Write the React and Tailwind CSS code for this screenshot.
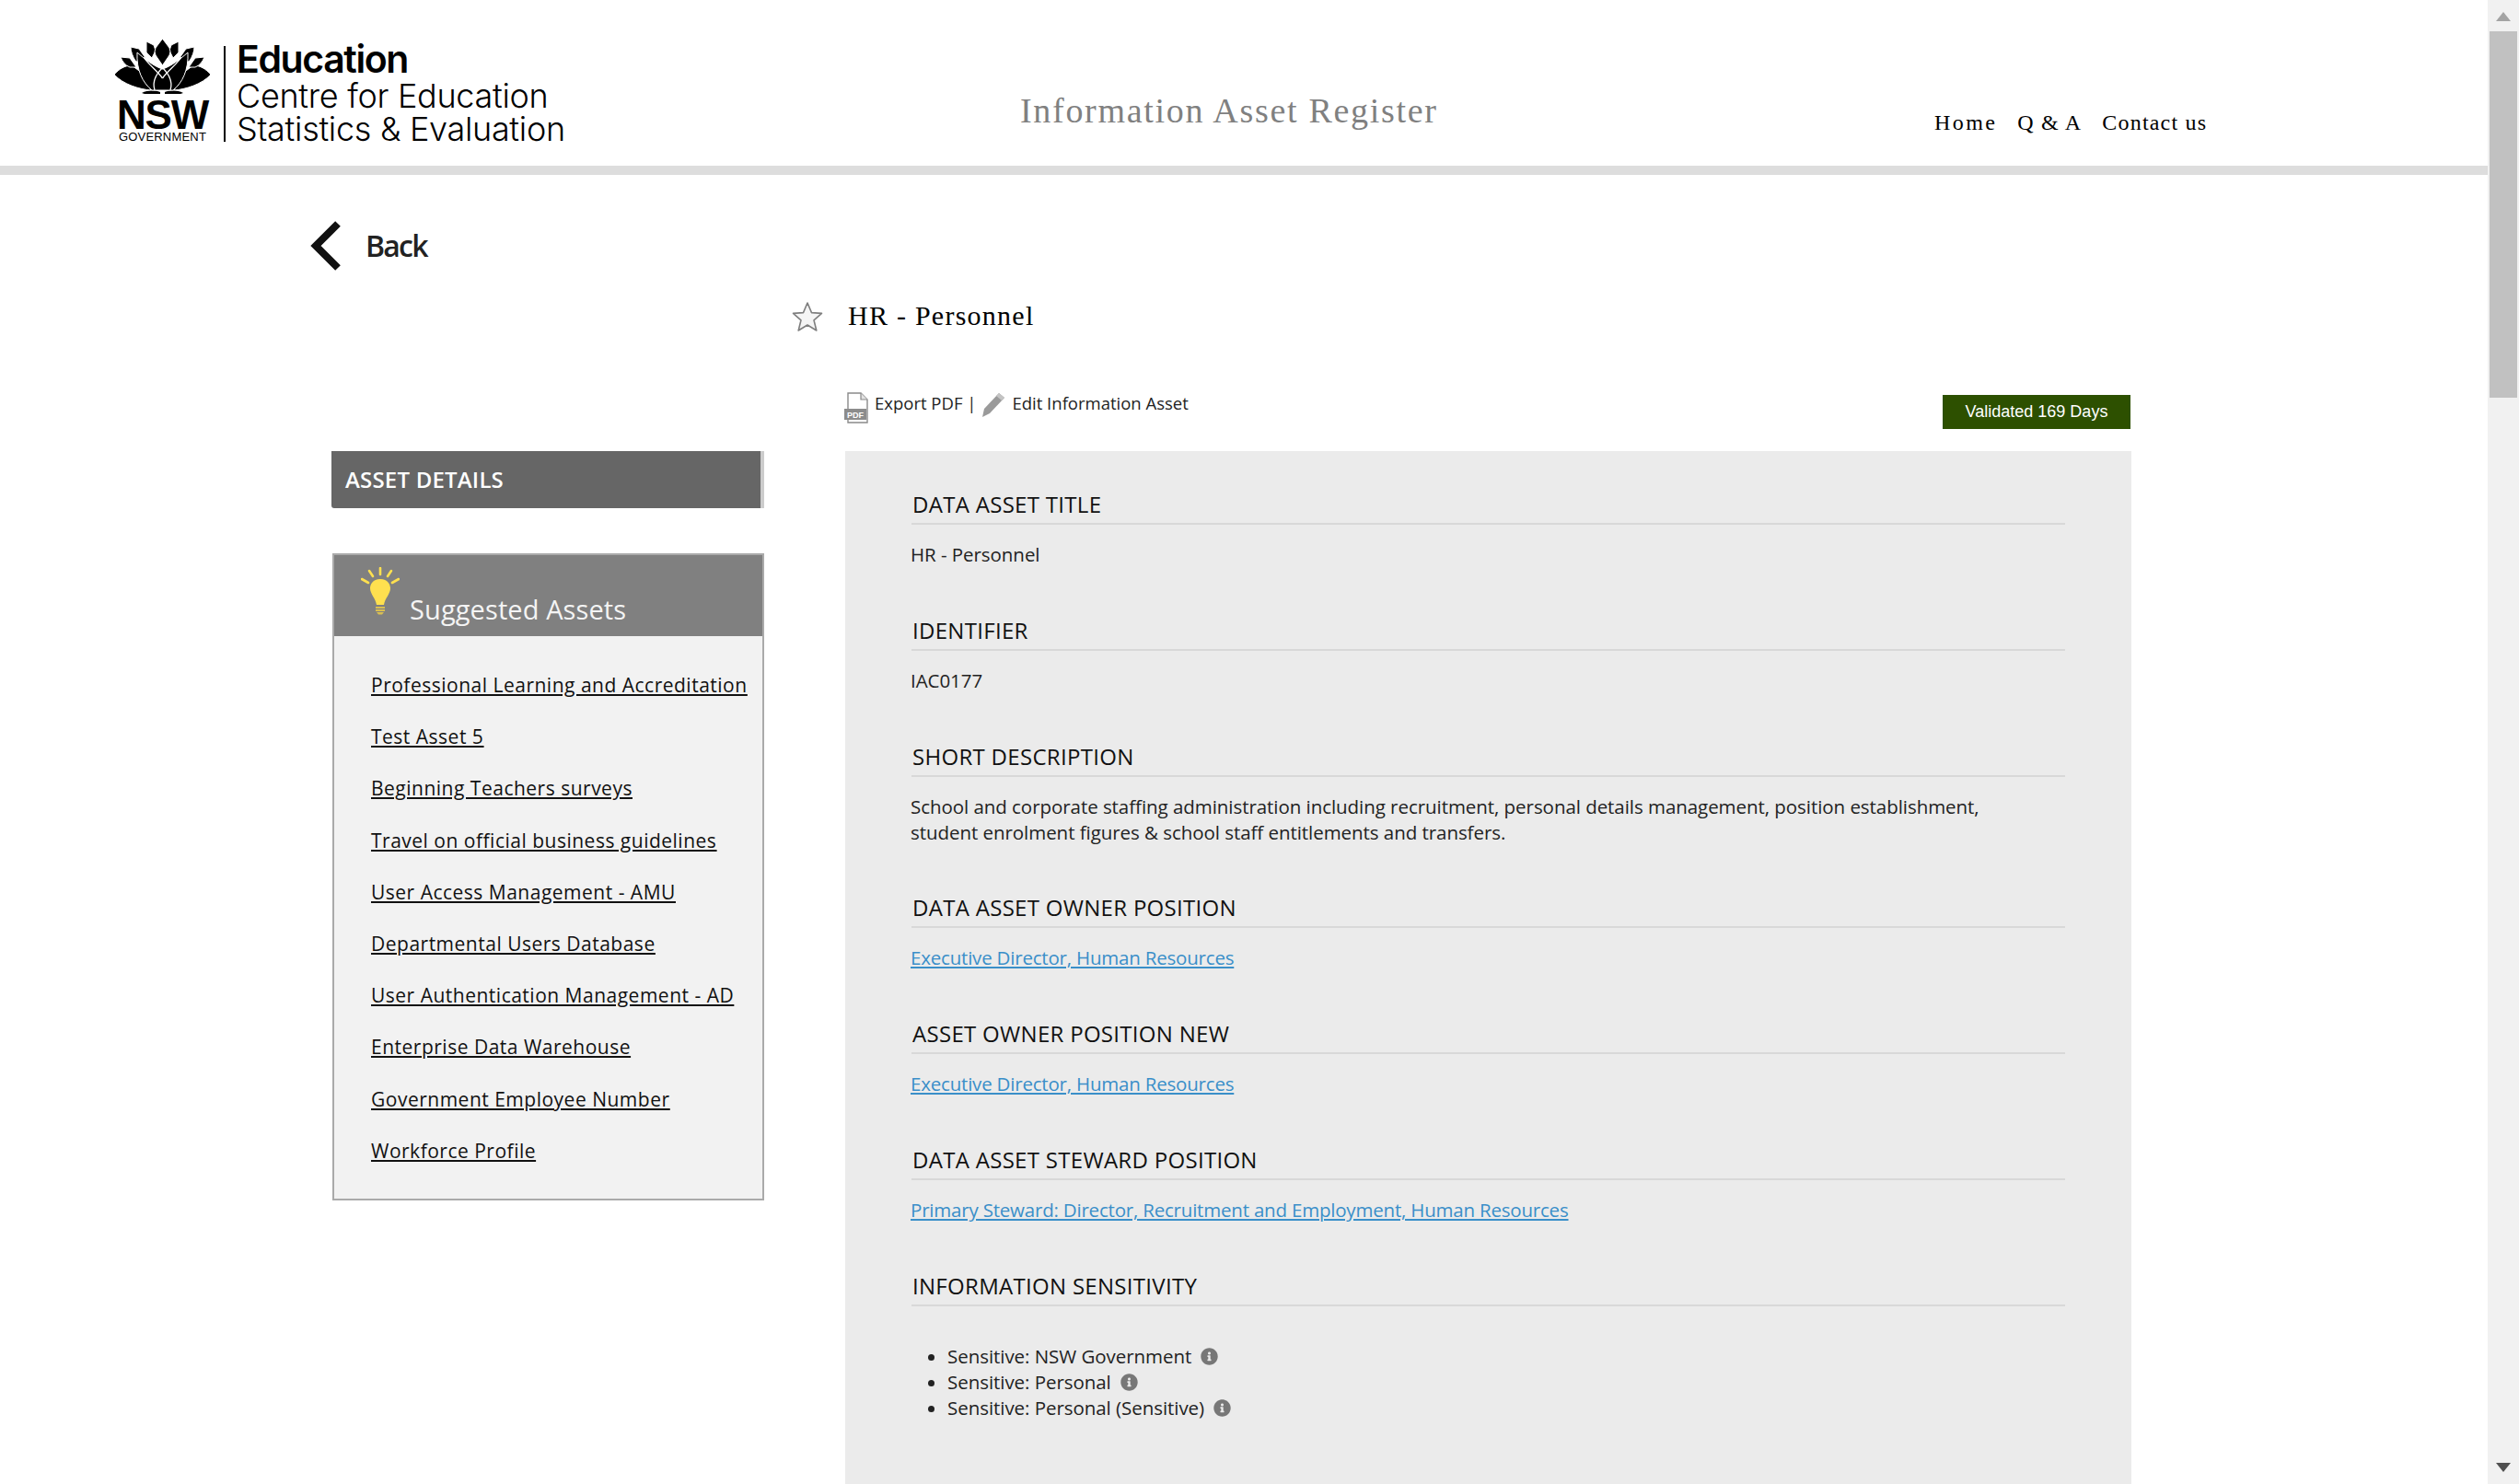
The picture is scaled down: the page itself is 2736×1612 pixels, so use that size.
import React from 'react';
import { FaInfoCircle } from 'react-icons/fa';

const sans = 'font-["Open_Sans",sans-serif]';

const suggested = [
  'Professional Learning and Accreditation',
  'Test Asset 5',
  'Beginning Teachers surveys',
  'Travel on official business guidelines',
  'User Access Management - AMU',
  'Departmental Users Database',
  'User Authentication Management - AD',
  'Enterprise Data Warehouse',
  'Government Employee Number',
  'Workforce Profile',
];

const sensitivity = ['Sensitive: NSW Government', 'Sensitive: Personal', 'Sensitive: Personal (Sensitive)'];

// waratah logo, right half is the left half mirrored
const FlowerHalf = () => (
  <g stroke="#fff" strokeWidth="1">
    <path d="M0 39 C5 33 12 29 19 29 L30 37 L40 56 C28 55 10 50 0 39 Z" />
    <path d="M7 20 L17 21 L24 31 L17 31 C12 29 9 25 7 20 Z" />
    <path d="M18 9 L27 11 L34 21 L30 28 L23 24 C20 19 18 14 18 9 Z" />
    <path d="M35 3 L43 7 L45 13 L41 21 L35 15 Z" />
    <path d="M30 59 C36 56 44 56 50 58 L50 60 L36 60 C34 60 32 60 30 59 Z" stroke="none" />
  </g>
);

const Flower = () => (
  <svg width="105" height="60" viewBox="0 0 105 60" className="block" fill="#000">
    <FlowerHalf />
    <g transform="translate(105 0) scale(-1 1)">
      <FlowerHalf />
    </g>
    <path d="M25 15 C33 22 43 30 52.5 33 C62 30 72 22 80 15 C81 34 74 48 64 56 L41 56 C31 48 24 34 25 15 Z" stroke="#fff" strokeWidth="1" />
    <path d="M52.5 0 L60 10 Q62 14 60 18 L52.5 29 L45 18 Q43 14 45 10 Z" stroke="#fff" strokeWidth="1" />
    <g fill="none" stroke="#fff" strokeWidth="1.3">
      <path d="M32 20 C37 28 46 34 52.5 43" />
      <path d="M73 20 C68 28 59 34 52.5 43" />
      <path d="M44 56 C41 46 46 36 58 27" />
      <path d="M61 56 C64 46 59 36 47 27" />
    </g>
  </svg>
);

const Bulb = () => (
  <svg width="42" height="52" viewBox="0 0 42 52" className="block">
    <g stroke="#ffe04f" strokeWidth="2.6" strokeLinecap="round">
      <path d="M21 1 L21 8" />
      <path d="M9 4 L13 10" />
      <path d="M33 4 L29 10" />
      <path d="M1 13 L8 17" />
      <path d="M41 13 L34 17" />
    </g>
    <path d="M21 13 C13 13 10 19 10 23 C10 29 16 34 17 41 L25 41 C26 34 32 29 32 23 C32 19 29 13 21 13 Z" fill="#ffe04f" />
    <path d="M16 43 H26 V45 H16 Z M16 46 H26 V48 H16 Z M17 49 H25 L23 51.5 H19 Z" fill="#d9bf52" />
  </svg>
);

const PdfIcon = () => (
  <svg width="28" height="34" viewBox="0 0 28 34" className="block">
    <path d="M5 1 H19 L26 8 V33 H5 Z" fill="#fff" stroke="#8a8a8a" strokeWidth="1.4" />
    <path d="M19 1 V8 H26" fill="#e2e2e2" stroke="#8a8a8a" strokeWidth="1.2" />
    <rect x="1" y="18" width="24" height="12" fill="#8c8c8c" />
    <text x="13" y="27.5" textAnchor="middle" fontSize="9" fontWeight="700" fill="#fff" fontFamily="Liberation Sans, sans-serif">PDF</text>
  </svg>
);

const Pencil = () => (
  <svg width="26" height="28" viewBox="0 0 26 28" className="block">
    <path d="M19 1 L25 6 L9 23 L1 27 L3 18 Z" fill="#9a9a9a" />
    <path d="M19 1 L25 6 L22 9 L16 4 Z" fill="#c4c4c4" />
  </svg>
);

const Star = () => (
  <svg width="34" height="34" viewBox="0 0 34 34" className="block">
    <path d="M17 2 L21.5 12.6 L32.5 13.4 L24 20.8 L26.8 32 L17 26 L7.2 32 L10 20.8 L1.5 13.4 L12.5 12.6 Z" fill="#f5f5f5" stroke="#7f7f7f" strokeWidth="1.6" strokeLinejoin="round" />
  </svg>
);

const Section = ({ title, children, className = 'mb-[51px]' }) => (
  <section className={className}>
    <h3 className="border-b-2 border-[#d8d8d8] pb-[2px] pl-px text-[24px] leading-[36px] tracking-[0.3px] text-[#111]">{title}</h3>
    {children}
  </section>
);

const Value = ({ children }) => <div className="ml-[-1px] mt-[18px] text-[20.5px] leading-[28px] tracking-[-0.05px] text-[#222]">{children}</div>;

const BlueLink = ({ children }) => <a className="tracking-[-0.2px] text-[#3a8fc9] underline">{children}</a>;

export default function App() {
  return (
    <div className={`flex h-[1612px] w-full overflow-hidden bg-white ${sans}`}>
      <div className="min-w-0 flex-1">
        <header className="flex h-[180px] items-start pl-[124px] pt-[42px]">
          <div className="w-[105px] shrink-0">
            <Flower />
            <div className='mt-[5px] text-center font-["Liberation_Sans",sans-serif] text-[44px] font-bold leading-[36px] tracking-[-1.2px] text-black'>NSW</div>
            <div className='mt-px whitespace-nowrap text-center font-["Liberation_Sans",sans-serif] text-[13px] leading-[10px] tracking-[0.2px] text-black'>GOVERNMENT</div>
          </div>
          <div className="ml-[14px] mt-[8px] h-[104px] w-[2px] shrink-0 bg-black" />
          <div className='ml-[12px] w-[360px] shrink-0 whitespace-nowrap font-["Inter",sans-serif] text-black'>
            <div className="text-[41px] font-semibold leading-[44px] tracking-[-1.4px]">Education</div>
            <div className="text-[36px] font-light leading-[36px] tracking-[-0.3px]">Centre for Education</div>
            <div className="text-[36px] font-light leading-[36px] tracking-[-0.3px]">Statistics &amp; Evaluation</div>
          </div>
          <div className='ml-[491px] mt-[58px] w-[452px] shrink-0 whitespace-nowrap font-["Liberation_Serif",serif] text-[38px] leading-[40px] tracking-[1.7px] text-[#808080]'>Information Asset Register</div>
          <nav className='ml-[541px] mt-[76px] flex gap-[22px] whitespace-nowrap font-["Liberation_Serif",serif] text-[24px] leading-[30px] tracking-[1.2px] text-black'>
            <a className="tracking-[2.4px]">Home</a>
            <a>Q &amp; A</a>
            <a>Contact us</a>
          </nav>
        </header>
        <div className="h-[10px] bg-[#dddddd]" />

        <div className="flex h-[125px] items-start gap-[24px] pl-[337px] pt-[50px]">
          <svg width="36" height="54" viewBox="0 0 36 54" className="block" fill="none">
            <path d="M30 3 L6 27 L30 51" stroke="#111" strokeWidth="8" />
          </svg>
          <span className="text-[32px] font-semibold leading-[54px] tracking-[-1.8px] text-[#222]">Back</span>
        </div>

        <div className="flex pl-[360px]">
          <aside className="w-[470px] shrink-0 pt-[175px]">
            <div className="flex h-[62px] items-center rounded-bl-[3px] border-r-[4px] border-[#cccccc] bg-[#666666] pl-[15px] text-[24px] font-semibold tracking-[0.2px] text-white">
              ASSET DETAILS
            </div>
            <div className="ml-px mt-[49px] border-2 border-[#aaaaaa] bg-[#f2f2f2]">
              <div className="flex h-[88px] items-start bg-[#808080] pl-[29px] pt-[13px]">
                <Bulb />
                <span className="ml-[11px] mt-[26px] text-[29px] leading-[40px] tracking-[0.1px] text-[#f4f4f4]">Suggested Assets</span>
              </div>
              <ul className="pb-[38px] pl-[40px] pt-[39px]">
                {suggested.map((name) => (
                  <li key={name} className="mb-[28.2px] text-[21px] leading-[28px] tracking-[0.5px] text-[#111] underline last:mb-0">
                    <a>{name}</a>
                  </li>
                ))}
              </ul>
            </div>
          </aside>

          <main className="ml-[30px] w-[1456px] shrink-0 pt-[6px]">
            <div className="flex h-[46px] items-center">
              <Star />
              <span className='mb-[4px] ml-[27px] font-["Liberation_Serif",serif] text-[30px] tracking-[1.25px] text-black'>HR - Personnel</span>
            </div>
            <div className="mt-[59px] flex h-[64px] items-start pl-[56px]">
              <PdfIcon />
              <span className="ml-[6px] mt-[-2px] text-[18.5px] leading-[28px] text-[#222]">Export PDF |</span>
              <span className="ml-[6px]"><Pencil /></span>
              <span className="ml-[7px] mt-[-2px] text-[18.5px] leading-[28px] text-[#222]">Edit Information Asset</span>
              <div className="ml-auto mr-[2px] mt-[3px] flex h-[37px] w-[204px] items-center justify-center bg-[#2d5000] font-['Liberation_Sans',sans-serif] text-[18px] text-white">
                Validated 169 Days
              </div>
            </div>
            <div className="ml-[58px] h-[1200px] w-[1397px] bg-[#ebebeb] px-[72px] pt-[40px]">
              <Section title="DATA ASSET TITLE"><Value>HR - Personnel</Value></Section>
              <Section title="IDENTIFIER"><Value>IAC0177</Value></Section>
              <Section title="SHORT DESCRIPTION" className="mb-[50px]">
                <Value>
                  School and corporate staffing administration including recruitment, personal details management, position establishment,
                  <br />
                  student enrolment figures &amp; school staff entitlements and transfers.
                </Value>
              </Section>
              <Section title="DATA ASSET OWNER POSITION"><Value><BlueLink>Executive Director, Human Resources</BlueLink></Value></Section>
              <Section title="ASSET OWNER POSITION NEW"><Value><BlueLink>Executive Director, Human Resources</BlueLink></Value></Section>
              <Section title="DATA ASSET STEWARD POSITION"><Value><BlueLink>Primary Steward: Director, Recruitment and Employment, Human Resources</BlueLink></Value></Section>
              <Section title="INFORMATION SENSITIVITY">
                <ul className="mt-[40px] list-disc pl-[39px] text-[20.5px] leading-[28px] tracking-[-0.05px] text-[#222]">
                  {sensitivity.map((s) => (
                    <li key={s}>
                      {s}
                      <FaInfoCircle className="ml-[10px] inline-block align-[-2px] text-[#777777]" size={19} />
                    </li>
                  ))}
                </ul>
              </Section>
            </div>
          </main>
        </div>
      </div>

      {/* fake browser scrollbar */}
      <div className="flex w-[34px] shrink-0 flex-col items-center justify-between bg-[#f1f1f1]">
        <div className="flex w-full flex-col items-center">
          <svg width="18" height="34" viewBox="0 0 18 34" className="block">
            <path d="M9 13 L17 23 H1 Z" fill="#a3a3a3" />
          </svg>
          <div className="h-[398px] w-[30px] bg-[#c1c1c1]" />
        </div>
        <svg width="18" height="34" viewBox="0 0 18 34" className="block">
          <path d="M9 21 L17 11 H1 Z" fill="#505050" />
        </svg>
      </div>
    </div>
  );
}
